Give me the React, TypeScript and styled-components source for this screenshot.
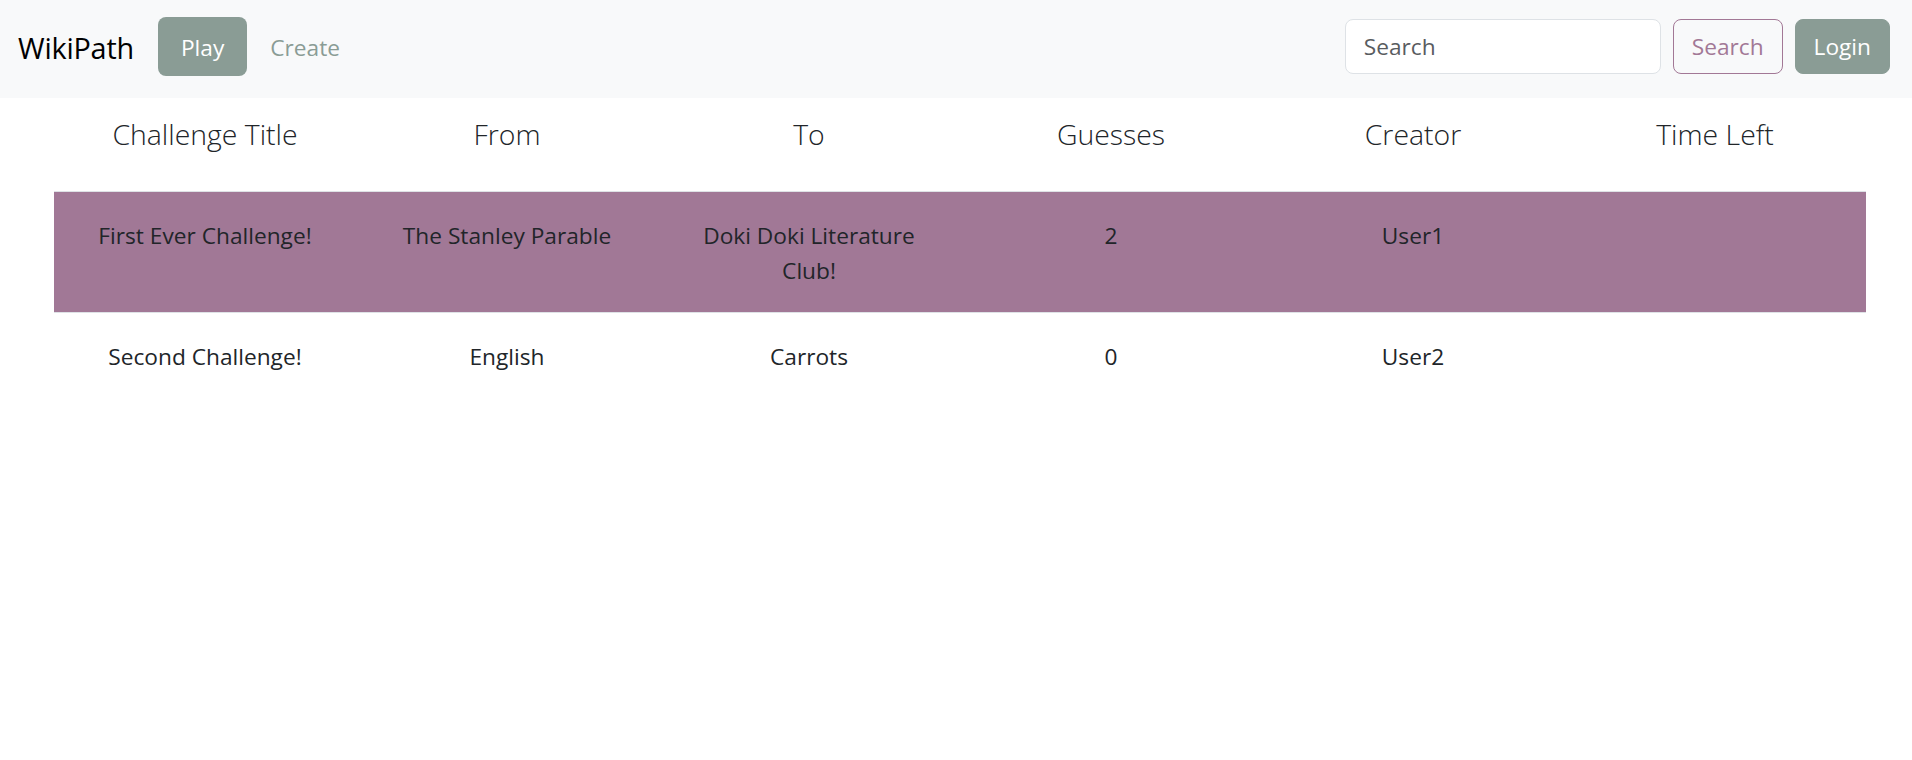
import React from "react";
import styled, { createGlobalStyle } from "styled-components";

const GlobalStyle = createGlobalStyle`
  html, body {
    margin: 0;
    padding: 0;
    background: #ffffff;
    font-family: "Open Sans", "Noto Sans", sans-serif;
    color: #212529;
  }
  * { box-sizing: border-box; }
`;

const Navbar = styled.nav`
  display: flex;
  align-items: center;
  justify-content: space-between;
  height: 98px;
  padding: 0 22px 5px 18px;
  background: #f8f9fa;
`;

const NavLeft = styled.div`
  display: flex;
  align-items: center;
`;

const Brand = styled.a`
  font-size: 28.8px;
  color: #000;
  margin-right: 24px;
  letter-spacing: -0.2px;
  line-height: 42px;
  padding-top: 2px;
`;

const NavLink = styled.a<{ $active?: boolean }>`
  display: flex;
  align-items: center;
  height: 59px;
  padding: 2px 23px 0;
  border-radius: 8px;
  font-size: 22.7px;
  color: ${(p) => (p.$active ? "#ffffff" : "#8a9c95")};
  background: ${(p) => (p.$active ? "#8a9c95" : "transparent")};
`;

const NavRight = styled.form`
  display: flex;
  align-items: center;
  gap: 12px;
`;

const SearchInput = styled.input`
  width: 316px;
  height: 55px;
  padding: 0 18px;
  border: 1px solid #dee2e6;
  border-radius: 8px;
  background: #fff;
  font-family: inherit;
  font-size: 22.7px;
  color: #212529;
  outline: none;
  &::placeholder {
    color: #595c5f;
  }
`;

const Button = styled.button<{ $variant: "outline" | "solid" }>`
  height: 55px;
  padding: 0 18px;
  border-radius: 8px;
  font-family: inherit;
  font-size: 22.7px;
  cursor: pointer;
  border: 1px solid ${(p) => (p.$variant === "outline" ? "#a27896" : "#8a9c95")};
  color: ${(p) => (p.$variant === "outline" ? "#a27896" : "#ffffff")};
  background: ${(p) => (p.$variant === "outline" ? "transparent" : "#8a9c95")};
`;

const Main = styled.main`
  padding: 0 46px 0 54px;
`;

const Table = styled.table`
  width: 100%;
  table-layout: fixed;
  border-collapse: collapse;
  text-align: center;
`;

const HeadCell = styled.th`
  font-weight: 300;
  font-size: 28.4px;
  line-height: 43px;
  padding: 15px 24px 35px;
  border-bottom: 1px solid #dee2e6;
  color: #212529;
`;

const Row = styled.tr<{ $highlight?: boolean }>`
  background: ${(p) => (p.$highlight ? "#a17896" : "transparent")};
  border-bottom: ${(p) => (p.$highlight ? "1px solid #dee2e6" : "none")};
`;

const Cell = styled.td`
  font-size: 22.7px;
  line-height: 35px;
  padding: 25.5px 24px 24.5px;
  vertical-align: top;
  color: #212529;
`;

type Challenge = {
  title: string;
  from: string;
  to: string;
  guesses: number;
  creator: string;
  timeLeft: string;
};

const challenges: Challenge[] = [
  {
    title: "First Ever Challenge!",
    from: "The Stanley Parable",
    to: "Doki Doki Literature Club!",
    guesses: 2,
    creator: "User1",
    timeLeft: "",
  },
  {
    title: "Second Challenge!",
    from: "English",
    to: "Carrots",
    guesses: 0,
    creator: "User2",
    timeLeft: "",
  },
];

const headers = ["Challenge Title", "From", "To", "Guesses", "Creator", "Time Left"];

export default function App() {
  return (
    <>
      <GlobalStyle />
      <Navbar>
        <NavLeft>
          <Brand>WikiPath</Brand>
          <NavLink $active>Play</NavLink>
          <NavLink>Create</NavLink>
        </NavLeft>
        <NavRight onSubmit={(e) => e.preventDefault()}>
          <SearchInput placeholder="Search" />
          <Button $variant="outline" type="submit">Search</Button>
          <Button $variant="solid" type="button">Login</Button>
        </NavRight>
      </Navbar>
      <Main>
        <Table>
          <thead>
            <tr>
              {headers.map((h) => (
                <HeadCell key={h}>{h}</HeadCell>
              ))}
            </tr>
          </thead>
          <tbody>
            {challenges.map((c, i) => (
              <Row key={c.title} $highlight={i === 0}>
                <Cell>{c.title}</Cell>
                <Cell>{c.from}</Cell>
                <Cell>{c.to}</Cell>
                <Cell>{c.guesses}</Cell>
                <Cell>{c.creator}</Cell>
                <Cell>{c.timeLeft}</Cell>
              </Row>
            ))}
          </tbody>
        </Table>
      </Main>
    </>
  );
}
